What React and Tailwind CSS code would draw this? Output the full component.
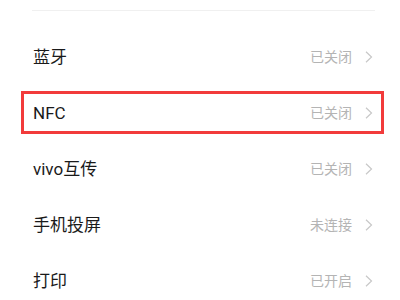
export default function App() {
  const rows = [
    { label: "蓝牙", value: "已关闭" },
    { label: "NFC", value: "已关闭", hl: true },
    { label: "vivo互传", value: "已关闭" },
    { label: "手机投屏", value: "未连接" },
    { label: "打印", value: "已开启" },
  ];
  return (
    <div
      className="w-[400px] h-[300px] bg-white overflow-hidden"
      style={{ fontFamily: 'Roboto, "Noto Sans CJK SC", sans-serif' }}
    >
      <div className="h-[10px]" />
      <div className="ml-[32px] mr-[25px] h-px bg-[#f0f0f0]" />
      <div className="h-[18px]" />
      {rows.map((r) => (
        <div key={r.label} className="relative h-[56px] flex items-center pl-[33px] pr-[27px]">
          <span className="flex-1 text-[17px] text-[#1a1a1a] leading-none">{r.label}</span>
          <span className="text-[14px] text-[#b4b4b4] leading-none">{r.value}</span>
          <svg width="8" height="12" viewBox="0 0 8 12" className="ml-[13px]">
            <path d="M1 0.8 L6.5 6 L1 11.2" fill="none" stroke="#c8c8c8" strokeWidth="1.2" />
          </svg>
          {r.hl && (
            <div className="absolute left-[21px] right-[16px] top-[6px] h-[43px] border-[3px] border-[#f23b3b]" />
          )}
        </div>
      ))}
    </div>
  );
}
